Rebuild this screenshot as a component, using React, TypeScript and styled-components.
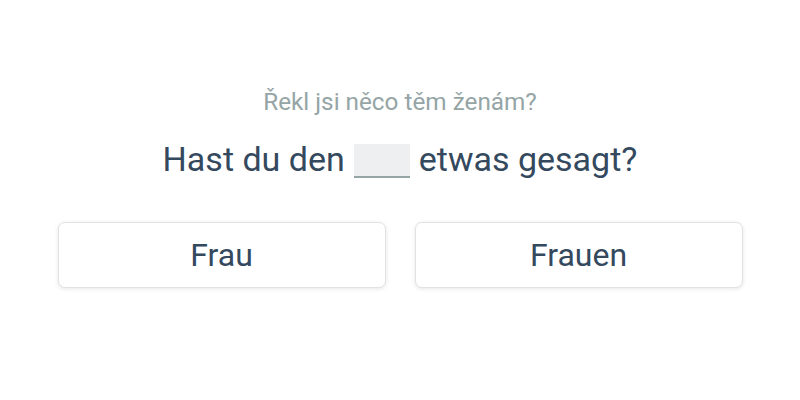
import React from 'react';
import styled, { createGlobalStyle } from 'styled-components';

const Global = createGlobalStyle`
  html, body {
    margin: 0;
    padding: 0;
    background: #ffffff;
    font-family: Roboto, 'Liberation Sans', sans-serif;
  }
`;

const Page = styled.div`
  width: 800px;
  height: 400px;
  display: flex;
  flex-direction: column;
  align-items: center;
  padding-top: 87px;
  box-sizing: border-box;
`;

const Hint = styled.div`
  font-size: 24.3px;
  line-height: 30px;
  color: #95a5a6;
`;

const Sentence = styled.div`
  margin-top: 22px;
  font-size: 34px;
  line-height: 40px;
  color: #34495e;
  display: flex;
  align-items: center;
  gap: 9px;
`;

const Blank = styled.span`
  display: inline-block;
  width: 56px;
  height: 32px;
  background: #eeeff1;
  border-bottom: 2px solid #95a5a6;
  margin-top: 4px;
`;

const Options = styled.div`
  margin-top: 43px;
  display: grid;
  grid-template-columns: 328px 328px;
  gap: 29px;
`;

const Option = styled.button`
  height: 66px;
  background: #ffffff;
  border: 1px solid #dfe3e5;
  border-radius: 7px;
  box-shadow: 0 1px 4px rgba(0, 0, 0, 0.1);
  font-family: Roboto, 'Liberation Sans', sans-serif;
  font-size: 32px;
  color: #34495e;
  cursor: pointer;
`;

export default function App() {
  return (
    <>
      <Global />
      <Page>
        <Hint>Řekl jsi něco těm ženám?</Hint>
        <Sentence>
          <span>Hast du den</span>
          <Blank />
          <span>etwas gesagt?</span>
        </Sentence>
        <Options>
          <Option>Frau</Option>
          <Option>Frauen</Option>
        </Options>
      </Page>
    </>
  );
}
